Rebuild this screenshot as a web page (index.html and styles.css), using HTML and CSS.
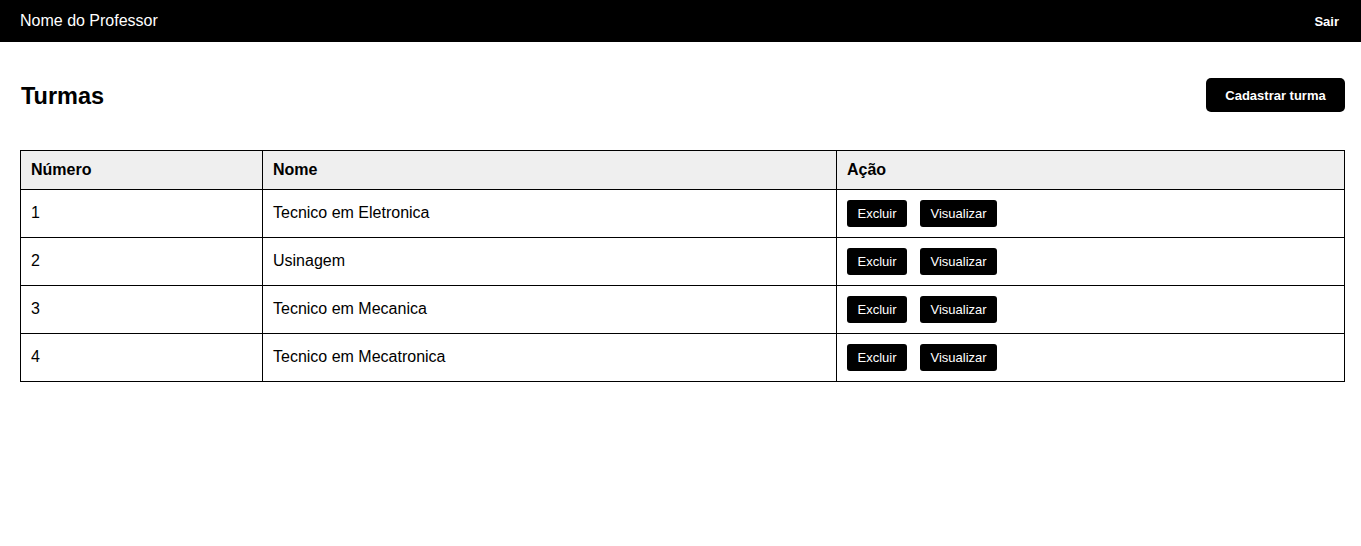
FILE: index.html
```html
<!DOCTYPE html>
<html lang="pt">
<head>
<meta charset="utf-8">
<title>Turmas</title>
<link rel="stylesheet" href="styles.css">
</head>
<body>
<header class="navbar">
  <span class="nav-name">Nome do Professor</span>
  <a class="nav-exit" href="#">Sair</a>
</header>
<main class="content">
  <div class="title-row">
    <h1 class="title">Turmas</h1>
    <button class="btn-primary">Cadastrar turma</button>
  </div>
  <table class="table">
    <thead>
      <tr>
        <th class="col-num">Número</th>
        <th class="col-name">Nome</th>
        <th>Ação</th>
      </tr>
    </thead>
    <tbody>
      <tr>
        <td>1</td>
        <td>Tecnico em Eletronica</td>
        <td><div class="actions"><button class="btn-sm">Excluir</button><button class="btn-sm">Visualizar</button></div></td>
      </tr>
      <tr>
        <td>2</td>
        <td>Usinagem</td>
        <td><div class="actions"><button class="btn-sm">Excluir</button><button class="btn-sm">Visualizar</button></div></td>
      </tr>
      <tr>
        <td>3</td>
        <td>Tecnico em Mecanica</td>
        <td><div class="actions"><button class="btn-sm">Excluir</button><button class="btn-sm">Visualizar</button></div></td>
      </tr>
      <tr>
        <td>4</td>
        <td>Tecnico em Mecatronica</td>
        <td><div class="actions"><button class="btn-sm">Excluir</button><button class="btn-sm">Visualizar</button></div></td>
      </tr>
    </tbody>
  </table>
</main>
</body>
</html>
```
FILE: styles.css
```css
* { box-sizing: border-box; }
body {
  margin: 0;
  font-family: "Liberation Sans", Arial, sans-serif;
  color: #000;
  background: #fff;
}
.navbar {
  height: 42px;
  background: #000;
  color: #fff;
  display: flex;
  align-items: center;
  justify-content: space-between;
  padding: 0 22px 0 20px;
}
.nav-name { font-size: 16px; }
.nav-exit {
  color: #fff;
  text-decoration: none;
  font-weight: bold;
  font-size: 13px;
}
.content { padding: 36px 16px 0 20px; }
.title-row {
  display: flex;
  align-items: center;
  justify-content: space-between;
  height: 34px;
  margin-bottom: 38px;
}
.title {
  margin: 2px 0 0 1px;
  font-size: 23.5px;
  font-weight: bold;
}
.btn-primary {
  background: #000;
  color: #fff;
  border: none;
  border-radius: 5px;
  font-family: inherit;
  font-weight: bold;
  font-size: 13px;
  height: 34px;
  padding: 0 16px;
  width: 139px;
}
.table {
  width: 1325px;
  border-collapse: collapse;
  font-size: 16px;
}
.table th, .table td {
  border: 1px solid #000;
  text-align: left;
  padding: 0 10px;
}
.table th {
  background: #efefef;
  font-weight: bold;
  height: 39px;
}
.table td {
  height: 48px;
  padding-bottom: 1px;
}
.col-num { width: 242px; }
.col-name { width: 574px; }
.actions {
  display: flex;
  gap: 13px;
}
.btn-sm {
  background: #000;
  color: #fff;
  border: none;
  border-radius: 3px;
  font-family: inherit;
  font-size: 13px;
  height: 27px;
  padding: 0 10.5px;
}
```
